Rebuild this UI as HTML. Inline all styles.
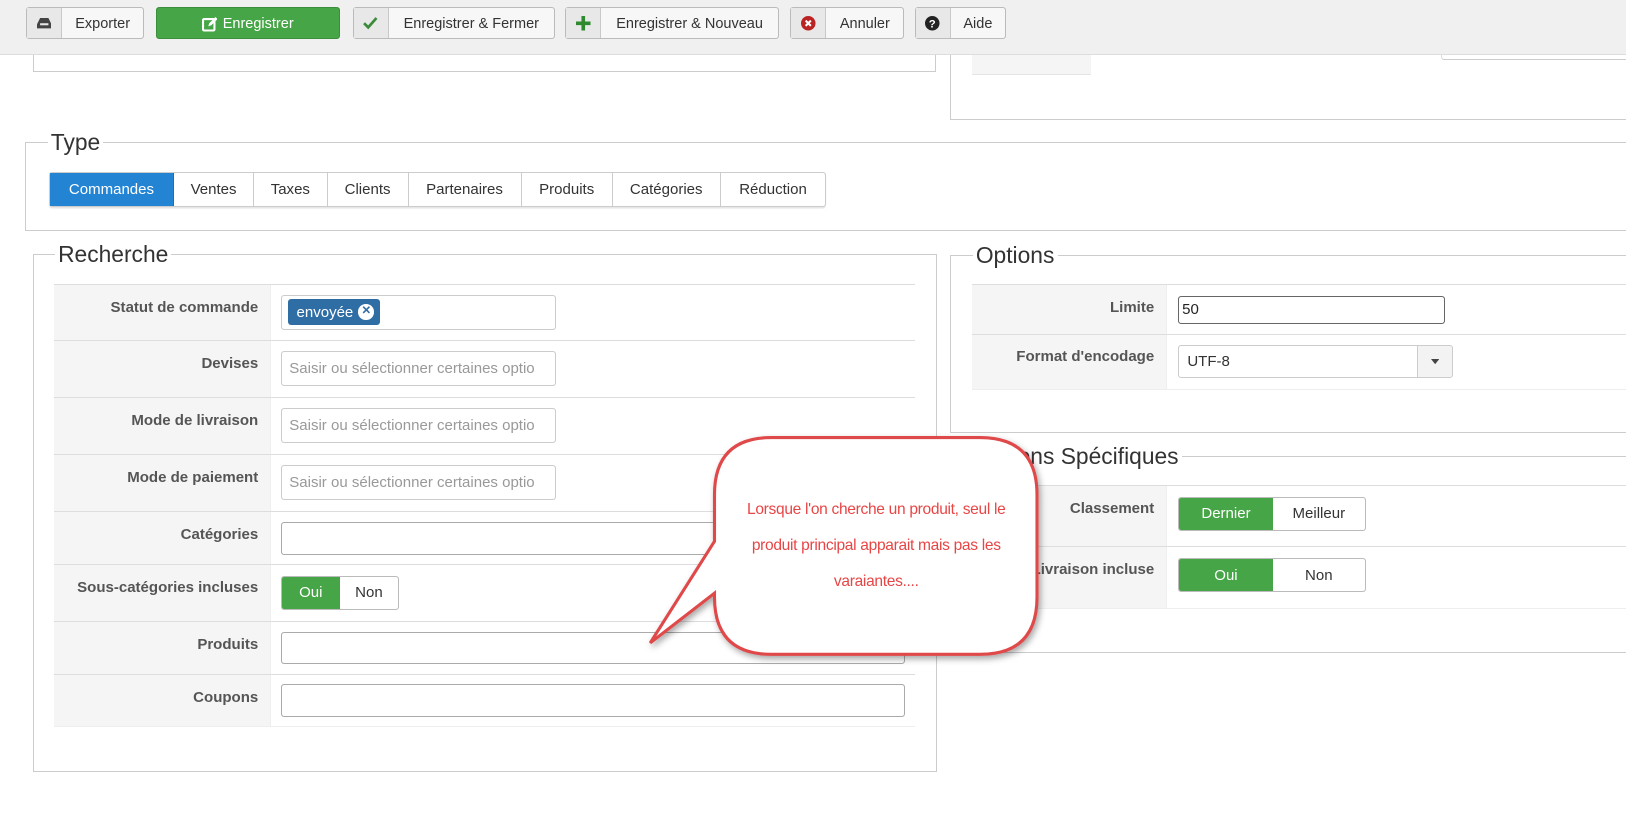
<!DOCTYPE html>
<html><head><meta charset="utf-8"><style>
*{box-sizing:border-box;margin:0;padding:0}
html,body{width:1626px;height:828px;overflow:hidden;background:#fff}
#w{zoom:1.037;position:relative;width:1568px;height:799px;font-family:"Liberation Sans",Arial,sans-serif;font-size:14px;color:#333}
.a{position:absolute}
.tb{left:0;top:0;width:1568px;height:53px;background:#f0f0f0;border-bottom:1px solid #ddd}
.btn{position:absolute;top:7px;height:31px;border:1px solid #bbb;border-radius:3px;background:#f7f7f7;display:flex;align-items:stretch;font-size:14px;color:#333}
.btn .ic{width:34px;border-right:1px solid #c8c8c8;background:#e8e8e8;display:flex;align-items:center;justify-content:center}
.btn .tx{flex:1;display:flex;align-items:center;justify-content:center;padding-top:2px}
.box{position:absolute;border:1px solid #ccc}
.lg{position:absolute;background:#fff;font-size:22px;color:#333;padding:0 3px;line-height:24px}
.tabs{left:47px;top:166px;height:34px;display:flex;border:1px solid #ccc;border-radius:3px;box-shadow:0 1px 1px rgba(0,0,0,.1)}
.tabs div{display:flex;align-items:center;justify-content:center;border-right:1px solid #ccc;font-size:14.5px;color:#333}
.tabs div:last-child{border-right:0}
.row{position:absolute;border-top:1px solid #ddd}
.lab{position:absolute;left:0;top:0;bottom:0;background:#f5f5f5;border-right:1px solid #eee;text-align:right;font-weight:bold;color:#555;padding-right:11px;padding-top:13px;font-size:14.5px}
.inp{position:absolute;border:1px solid #ccc;border-radius:3px;background:#fff;color:#999;font-size:14.5px;padding-left:7px;display:flex;align-items:center;overflow:hidden;white-space:nowrap}
.inp.d{border-color:#aaa}
.seg{position:absolute;display:flex;border:1px solid #bbb;border-radius:3px;overflow:hidden;font-size:14.5px}
.seg div{display:flex;align-items:center;justify-content:center}
.seg .on{background:#46a546;color:#fff}
</style></head><body><div id="w">
<div class="box" style="left:32px;top:40px;width:871px;height:29px;border-top:0"></div>
<div class="box" style="left:916px;top:40px;width:700px;height:76px;border-top:0"></div>
<div class="a" style="left:937px;top:50px;width:115px;height:22px;background:#f5f5f5;border-bottom:1px solid #e5e5e5"></div>
<div class="a" style="left:1390px;top:50px;width:200px;height:8px;border-bottom:1px solid #ccc;border-left:1px solid #ddd;border-radius:0 0 0 3px"></div>

<div class="a tb"></div>
<div class="btn" style="left:25px;width:114px"><div class="ic"><svg width="14" height="12" viewBox="0 0 14 12"><path d="M3 1h8l3 6v4H0V7z" fill="#444"/><rect x="3" y="6" width="8" height="2" fill="#e8e8e8"/></svg></div><div class="tx">Exporter</div></div>
<div class="btn" style="left:150px;width:178px;background:#46a546;border-color:#3b8e3b;color:#fff"><div class="tx"><svg width="14" height="14" viewBox="0 0 14 14" style="margin-right:6px"><rect x="1" y="2" width="11" height="11" rx="1" fill="none" stroke="#fff" stroke-width="2"/><path d="M6 9l1-3 6-6 2 2-6 6z" fill="#fff"/></svg>Enregistrer</div></div>
<div class="btn" style="left:340px;width:195px"><div class="ic"><svg width="14" height="12" viewBox="0 0 14 12"><path d="M1 6l4 4 8-9" fill="none" stroke="#3a8a3a" stroke-width="2.6"/></svg></div><div class="tx">Enregistrer &amp; Fermer</div></div>
<div class="btn" style="left:545px;width:206px"><div class="ic"><svg width="14" height="14" viewBox="0 0 14 14"><path d="M7 0v14M0 7h14" stroke="#2f8a2f" stroke-width="3.5"/></svg></div><div class="tx">Enregistrer &amp; Nouveau</div></div>
<div class="btn" style="left:762px;width:110px"><div class="ic"><svg width="14" height="14" viewBox="0 0 14 14"><circle cx="7" cy="7" r="7" fill="#b22"/><path d="M4.5 4.5l5 5M9.5 4.5l-5 5" stroke="#fff" stroke-width="2"/></svg></div><div class="tx">Annuler</div></div>
<div class="btn" style="left:882px;width:88px"><div class="ic"><svg width="14" height="14" viewBox="0 0 14 14"><circle cx="7" cy="7" r="7" fill="#222"/><text x="7" y="11" text-anchor="middle" font-size="11" font-weight="bold" fill="#fff" font-family="Liberation Sans">?</text></svg></div><div class="tx">Aide</div></div>

<!-- Type -->
<div class="box" style="left:24px;top:137px;width:1560px;height:86px"></div>
<div class="lg" style="left:46px;top:125px">Type</div>
<div class="a tabs">
<div style="width:120px;background:#2384d3;color:#fff;border-color:#1d6fb3">Commandes</div>
<div style="width:77px">Ventes</div><div style="width:71px">Taxes</div><div style="width:78px">Clients</div><div style="width:109px">Partenaires</div><div style="width:88px">Produits</div><div style="width:104px">Catégories</div><div style="width:101px">Réduction</div>
</div>

<!-- Recherche -->
<div class="box" style="left:32px;top:245px;width:872px;height:499px"></div>
<div class="lg" style="left:53px;top:233px">Recherche</div>
<div class="row" style="left:52px;top:274px;width:830px;height:54px"><div class="lab" style="width:209px">Statut de commande</div></div>
<div class="inp" style="left:271px;top:284px;width:265px;height:34px;padding-left:6px"><span style="background:#2f6ea5;color:#fff;border-radius:3px;padding:4px 6px 4px 8px;font-size:14.5px;display:flex;align-items:center">envoyée<span style="display:inline-block;width:15px;height:15px;border-radius:50%;background:#fff;color:#2f6ea5;font-size:11px;line-height:15px;text-align:center;margin-left:5px;font-weight:bold">✕</span></span></div>
<div class="row" style="left:52px;top:328px;width:830px;height:55px"><div class="lab" style="width:209px">Devises</div></div>
<div class="inp" style="left:271px;top:338px;width:265px;height:34px">Saisir ou sélectionner certaines optio</div>
<div class="row" style="left:52px;top:383px;width:830px;height:55px"><div class="lab" style="width:209px">Mode de livraison</div></div>
<div class="inp" style="left:271px;top:393px;width:265px;height:34px">Saisir ou sélectionner certaines optio</div>
<div class="row" style="left:52px;top:438px;width:830px;height:55px"><div class="lab" style="width:209px">Mode de paiement</div></div>
<div class="inp" style="left:271px;top:448px;width:265px;height:34px">Saisir ou sélectionner certaines optio</div>
<div class="row" style="left:52px;top:493px;width:830px;height:51px"><div class="lab" style="width:209px">Catégories</div></div>
<div class="inp d" style="left:271px;top:503px;width:602px;height:32px"></div>
<div class="row" style="left:52px;top:544px;width:830px;height:55px"><div class="lab" style="width:209px">Sous-catégories incluses</div></div>
<div class="seg" style="left:271px;top:555px;width:114px;height:33px"><div class="on" style="width:56px">Oui</div><div style="width:57px;color:#333">Non</div></div>
<div class="row" style="left:52px;top:599px;width:830px;height:51px"><div class="lab" style="width:209px">Produits</div></div>
<div class="inp d" style="left:271px;top:609px;width:602px;height:31px"></div>
<div class="row" style="left:52px;top:650px;width:830px;height:51px;border-bottom:1px solid #eee"><div class="lab" style="width:209px">Coupons</div></div>
<div class="inp d" style="left:271px;top:660px;width:602px;height:31px"></div>

<!-- Options -->
<div class="box" style="left:916px;top:246px;width:700px;height:172px"></div>
<div class="lg" style="left:938px;top:234px">Options</div>
<div class="row" style="left:937px;top:274px;width:640px;height:48px"><div class="lab" style="width:188px">Limite</div></div>
<div class="inp" style="left:1136px;top:285px;width:257px;height:27px;border-color:#666;color:#222;padding-left:3px">50</div>
<div class="row" style="left:937px;top:322px;width:640px;height:54px;border-bottom:1px solid #eee"><div class="lab" style="width:188px">Format d'encodage</div></div>
<div class="inp" style="left:1136px;top:333px;width:265px;height:32px;color:#333;padding-left:8px">UTF-8<div style="position:absolute;right:0;top:0;bottom:0;width:34px;border-left:1px solid #ccc;background:#f3f3f3;display:flex;align-items:center;justify-content:center"><svg width="8" height="5"><path d="M0 0h8L4 5z" fill="#444"/></svg></div></div>

<!-- Options Spécifiques -->
<div class="box" style="left:916px;top:440px;width:700px;height:190px"></div>
<div class="lg" style="left:938px;top:428px">Options Spécifiques</div>
<div class="row" style="left:937px;top:468px;width:640px;height:59px"><div class="lab" style="width:188px">Classement</div></div>
<div class="seg" style="left:1136px;top:479px;width:181px;height:33px"><div class="on" style="width:91px">Dernier</div><div style="width:89px;color:#333">Meilleur</div></div>
<div class="row" style="left:937px;top:527px;width:640px;height:60px;border-bottom:1px solid #eee"><div class="lab" style="width:188px">Livraison incluse</div></div>
<div class="seg" style="left:1136px;top:538px;width:181px;height:33px"><div class="on" style="width:91px">Oui</div><div style="width:89px;color:#333">Non</div></div>

<!-- Bubble -->
<svg class="a" style="left:0;top:0" width="1568" height="799">
<defs><filter id="sh" x="-10%" y="-10%" width="130%" height="130%"><feDropShadow dx="2" dy="3" stdDeviation="3" flood-color="#000" flood-opacity=".35"/></filter></defs>
<path d="M744 422H945Q1000 422 1000 477V576Q1000 631 945 631H744Q689 631 689 576V572L627 620L689 522V477Q689 422 744 422Z" fill="#fff" stroke="#e04848" stroke-width="3" filter="url(#sh)"/>
</svg>
<div class="a" style="left:692px;top:474px;width:306px;text-align:center;color:#e84545;font-size:15px;line-height:35px;letter-spacing:-.3px">Lorsque l'on cherche un produit, seul le<br>produit principal apparait mais pas les<br>varaiantes....</div>
</div></body></html>
